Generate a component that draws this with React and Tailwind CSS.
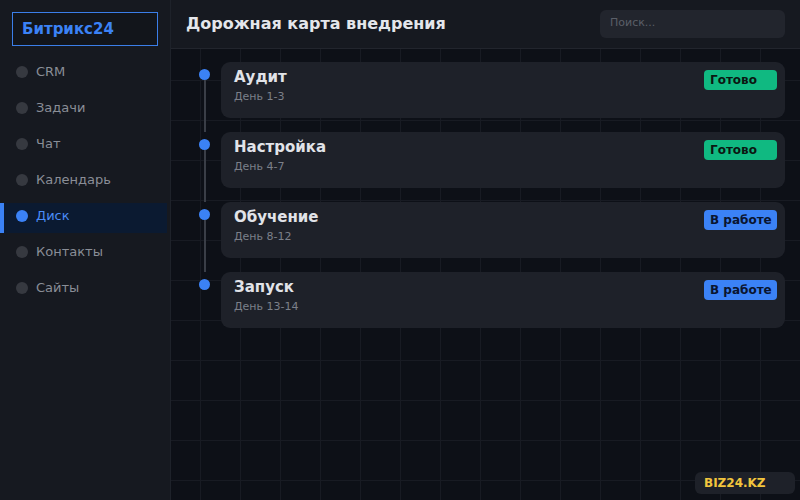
import React from "react";

const navItems = [
  { name: "CRM" },
  { name: "Задачи" },
  { name: "Чат" },
  { name: "Календарь" },
  { name: "Диск", active: true },
  { name: "Контакты" },
  { name: "Сайты" },
];

const steps = [
  { title: "Аудит", days: "День 1-3", status: "Готово", done: true },
  { title: "Настройка", days: "День 4-7", status: "Готово", done: true },
  { title: "Обучение", days: "День 8-12", status: "В работе", done: false },
  { title: "Запуск", days: "День 13-14", status: "В работе", done: false },
];

const App = () => {
  return (
    <div
      className="relative flex h-[500px] w-full overflow-hidden bg-[#0d1017] bg-[linear-gradient(to_right,#181b23_1px,transparent_1px),linear-gradient(to_bottom,#181b23_1px,transparent_1px)] bg-[size:40px_40px] text-[#e4e6eb]"
      style={{ fontFamily: '"DejaVu Sans", sans-serif' }}
    >
      <aside className="flex w-[171px] shrink-0 flex-col border-r border-[#1e222a] bg-[#161920]">
        <div className="m-3 mb-0 flex h-[34px] items-center border border-[#3b7ee8] bg-[#12151b] px-[9px]">
          <span className="text-[15px] font-bold text-[#3b82f6]">Битрикс24</span>
        </div>
        <nav className="mt-[13px] flex flex-col gap-[6px]">
          {navItems.map((item) => (
            <div
              key={item.name}
              className={
                item.active
                  ? "mr-[3px] flex h-[30px] items-start border-l-4 border-[#3b82f6] bg-[#0b1a31] pl-3 pt-[5px]"
                  : "mr-[3px] flex h-[30px] items-start border-l-4 border-transparent pl-3 pt-[5px]"
              }
            >
              <span
                className={
                  item.active
                    ? "mt-[2px] h-3 w-3 rounded-full bg-[#3b82f6]"
                    : "mt-[2px] h-3 w-3 rounded-full bg-[#363940]"
                }
              ></span>
              <span
                className={
                  item.active
                    ? "ml-2 text-[13px] leading-[16px] text-[#4a8cf7]"
                    : "ml-2 text-[13px] leading-[16px] text-[#8a8e97]"
                }
              >
                {item.name}
              </span>
            </div>
          ))}
        </nav>
      </aside>

      <div className="flex flex-1 flex-col">
        <header className="flex h-[49px] shrink-0 items-center justify-between border-b border-[#22252d] bg-[#161920] pl-[15px] pr-[15px] pb-[1px]">
          <h1 className="text-[16px] font-bold text-[#e4e6eb]">Дорожная карта внедрения</h1>
          <div className="flex h-[28px] w-[185px] items-center rounded-md bg-[#22252d] px-[10px]">
            <span className="text-[11px] text-[#5b5f68]">Поиск...</span>
          </div>
        </header>

        <main className="flex flex-col pl-[28px] pr-[15px] pt-[13px]">
          {steps.map((step, i) => (
            <div key={step.title} className="flex">
              <div className="flex w-[22px] shrink-0 flex-col items-center pr-[11px]">
                <span className="mt-[7px] h-[11px] w-[11px] shrink-0 rounded-full bg-[#3b82f6]"></span>
                {i < steps.length - 1 && <span className="w-[2px] flex-1 bg-[#3a3e47]"></span>}
              </div>
              <div className="flex-1 pb-[14px]">
                <div className="flex h-[56px] justify-between rounded-[9px] bg-[#1e2129] pl-[13px] pr-2 pt-[5px]">
                  <div className="flex flex-col">
                    <span className="text-[15px] font-bold leading-[20px] text-[#e1e3e8]">{step.title}</span>
                    <span className="mt-[2px] text-[11px] leading-[16px] text-[#7c8089]">{step.days}</span>
                  </div>
                  <span
                    className={
                      step.done
                        ? "mt-[3px] h-[20px] min-w-[73px] whitespace-nowrap rounded bg-[#10b981] pl-[6px] pr-[5px] text-[12px] font-bold leading-[20px] text-[#0b1712]"
                        : "mt-[3px] h-[20px] min-w-[73px] whitespace-nowrap rounded bg-[#3b82f6] pl-[6px] pr-[5px] text-[12px] font-bold leading-[20px] text-[#0a1530]"
                    }
                  >
                    {step.status}
                  </span>
                </div>
              </div>
            </div>
          ))}
        </main>
      </div>

      <div className="absolute bottom-[6px] right-[5px] flex h-[22px] w-[100px] items-center rounded-md bg-[#1e2129] px-[9px]">
        <span className="text-[12px] font-bold text-[#f2c53d]">BIZ24.KZ</span>
      </div>
    </div>
  );
};

export default App;
